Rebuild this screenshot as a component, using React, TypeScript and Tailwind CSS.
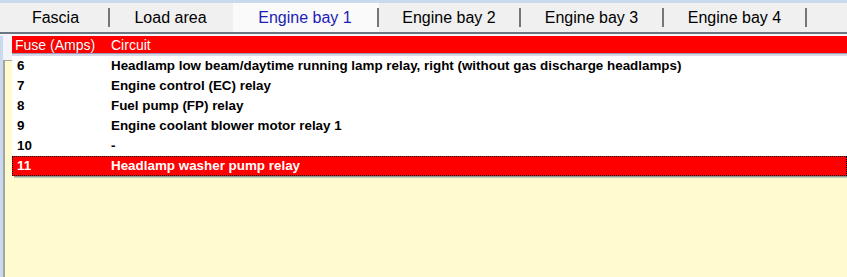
import React from "react";

type Row = { fuse: string; circuit: string; selected?: boolean };

const tabs = [
  { label: "Fascia", width: "w-[107px]", sep: true },
  { label: "Load area", width: "w-[123px]", sep: false },
  { label: "Engine bay 1", width: "w-[146px]", sep: true, active: true },
  { label: "Engine bay 2", width: "w-[142px]", sep: true },
  { label: "Engine bay 3", width: "w-[143px]", sep: true },
  { label: "Engine bay 4", width: "w-[143px]", sep: true },
];

const rows: Row[] = [
  {
    fuse: "6",
    circuit:
      "Headlamp low beam/daytime running lamp relay, right (without gas discharge headlamps)",
  },
  { fuse: "7", circuit: "Engine control (EC) relay" },
  { fuse: "8", circuit: "Fuel pump (FP) relay" },
  { fuse: "9", circuit: "Engine coolant blower motor relay 1" },
  { fuse: "10", circuit: "-" },
  { fuse: "11", circuit: "Headlamp washer pump relay", selected: true },
];

const App = () => {
  return (
    <div className="flex h-[277px] w-[847px] flex-col overflow-hidden bg-[#c9d9ee] font-['Liberation_Sans',Arial,sans-serif]">
      {/* Tab strip */}
      <div className="mt-[3px] flex h-[29px] bg-[#f0f0f0] pl-[3px]">
        {tabs.map((tab) => (
          <div
            key={tab.label}
            className={`flex ${tab.width} items-center ${
              tab.active ? "bg-[#fafafa]" : ""
            }`}
          >
            <span
              className={`flex-1 text-center text-[16px] leading-none ${
                tab.active ? "text-[#1c1cb8]" : "text-black"
              }`}
            >
              {tab.label}
            </span>
            {tab.sep ? (
              <span className="h-[19px] w-[2px] bg-[#767676]" />
            ) : (
              <span className="w-[2px]" />
            )}
          </div>
        ))}
      </div>
      <div className="h-[2px] bg-[#6b7680]" />
      <div className="h-[2px] bg-[#f4f6f8]" />

      {/* Body */}
      <div className="flex flex-1">
        <div className="w-[3px] bg-[#c9d9ee]" />
        <div className="flex flex-1 flex-col">
          <div className="flex">
            <div className="flex w-[9px] flex-col">
              <div className="h-[24px] bg-[#f2f4f7]" />
              <div className="flex-1 border-l-2 border-t border-[#a4a4a4] bg-[#fffbcf]" />
            </div>
            <div className="flex flex-1 flex-col bg-[#fffbcf]">
              <div className="bg-white">
                {/* Header */}
                <div className="flex h-[17px] items-center bg-[#ff0000] text-[14px] leading-none text-white">
                  <span className="w-[99px] pl-[3px] [text-shadow:0_0_1px_#a00000]">
                    Fuse (Amps)
                  </span>
                  <span>Circuit</span>
                </div>
                <div className="h-[1px] bg-[#9a9ab8]" />
                <div className="h-[2px] bg-[#d8d8e6]" />
                {rows.map((row) => (
                  <div
                    key={row.fuse}
                    className={`flex h-[20px] items-center text-[13.4px] font-bold leading-none ${
                      row.selected
                        ? "border border-dotted border-black bg-[#ff0000] text-white"
                        : "border border-transparent text-black"
                    }`}
                  >
                    <span className="w-[98px] pl-[4px]">{row.fuse}</span>
                    <span>{row.circuit}</span>
                  </div>
                ))}
              </div>
              <div className="ml-[2px] h-[1px] bg-[#8f9c96]" />
              <div className="ml-[2px] h-[1px] bg-[#c4cbb8]" />
            </div>
          </div>
          <div className="flex-1 border-l-2 border-[#a4a4a4] bg-[#fffbcf]" />
        </div>
      </div>
    </div>
  );
};

export default App;
